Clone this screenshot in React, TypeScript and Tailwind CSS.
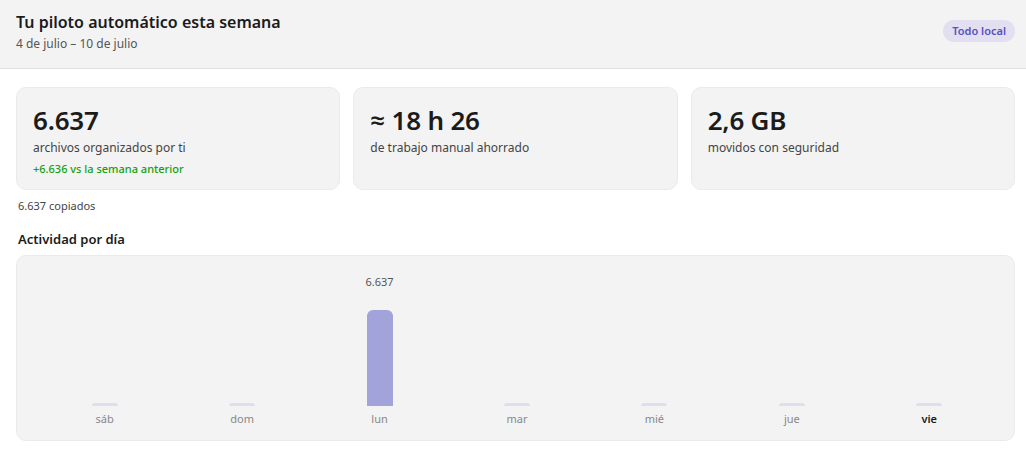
import React from "react";

const days = [
  { d: "sáb", v: 0 },
  { d: "dom", v: 0 },
  { d: "lun", v: 6637 },
  { d: "mar", v: 0 },
  { d: "mié", v: 0 },
  { d: "jue", v: 0 },
  { d: "vie", v: 0, today: true },
];

function Card({ value, label, extra }: { value: string; label: string; extra?: string }) {
  return (
    <div className="flex-1 h-[103px] rounded-[10px] border border-[#ebebeb] bg-[#f3f3f3] px-4 pt-[15px]">
      <div className="text-[26px] leading-[34px] font-semibold text-[#1b1b1b] tracking-[-0.2px]">{value}</div>
      <div className="mt-[3px] text-[12px] leading-[16px] text-[#444]">{label}</div>
      {extra && <div className="mt-[5px] text-[11px] leading-[16px] font-medium text-[#13a10e]">{extra}</div>}
    </div>
  );
}

export default function App() {
  const max = 6637;
  return (
    <div className="w-[1026px] h-[455px] bg-white overflow-hidden" style={{ fontFamily: '"Noto Sans", "Open Sans", sans-serif' }}>
      <div className="h-[69px] bg-[#f3f3f3] border-b border-[#e0e0e0] pl-4 pr-[11px] flex items-start justify-between">
        <div className="pt-[11px]">
          <div className="text-[16px] leading-[22px] font-semibold text-[#1b1b1b]">Tu piloto automático esta semana</div>
          <div className="text-[12px] leading-[22px] text-[#555]">4 de julio – 10 de julio</div>
        </div>
        <div className="mt-[20px] h-[22px] px-[9px] rounded-full bg-[#e1dff0] text-[#5a50c0] text-[11px] font-semibold flex items-center pt-[1px]">Todo local</div>
      </div>
      <div className="pl-4 pr-[11px] pt-[18px]">
        <div className="flex gap-[13px]">
          <Card value="6.637" label="archivos organizados por ti" extra="+6.636 vs la semana anterior" />
          <Card value="≈ 18 h 26" label="de trabajo manual ahorrado" />
          <Card value="2,6 GB" label="movidos con seguridad" />
        </div>
        <div className="mt-[8px] pl-[2px] text-[11px] leading-[16px] text-[#444]">6.637 copiados</div>
        <div className="mt-[16px] pl-[2px] text-[13px] leading-[18px] font-semibold text-[#1b1b1b]">Actividad por día</div>
        <div className="mt-[7px] h-[186px] rounded-[10px] border border-[#ebebeb] bg-[#f3f3f3] pl-[19px] pr-[16px] pt-[17px] grid grid-cols-7">
          {days.map((x) => {
            const h = Math.max(3, Math.round((x.v / max) * 96));
            return (
              <div key={x.d} className="flex flex-col items-center">
                <div className="h-[18px] text-[11px] leading-[18px] text-[#555]">{x.v > 0 ? x.v.toLocaleString("de-DE") : ""}</div>
                <div className="h-[115px] flex items-end">
                  <div
                    className={x.v > 0 ? "w-[26px] rounded-t-[6px] bg-[#a3a3dc]" : "w-[26px] rounded-t-[6px] bg-[#dedeee]"}
                    style={{ height: h }}
                  />
                </div>
                <div className={x.today ? "mt-[5px] text-[11px] leading-[16px] font-semibold text-[#1b1b1b]" : "mt-[5px] text-[11px] leading-[16px] text-[#888]"}>{x.d}</div>
              </div>
            );
          })}
        </div>
      </div>
    </div>
  );
}
